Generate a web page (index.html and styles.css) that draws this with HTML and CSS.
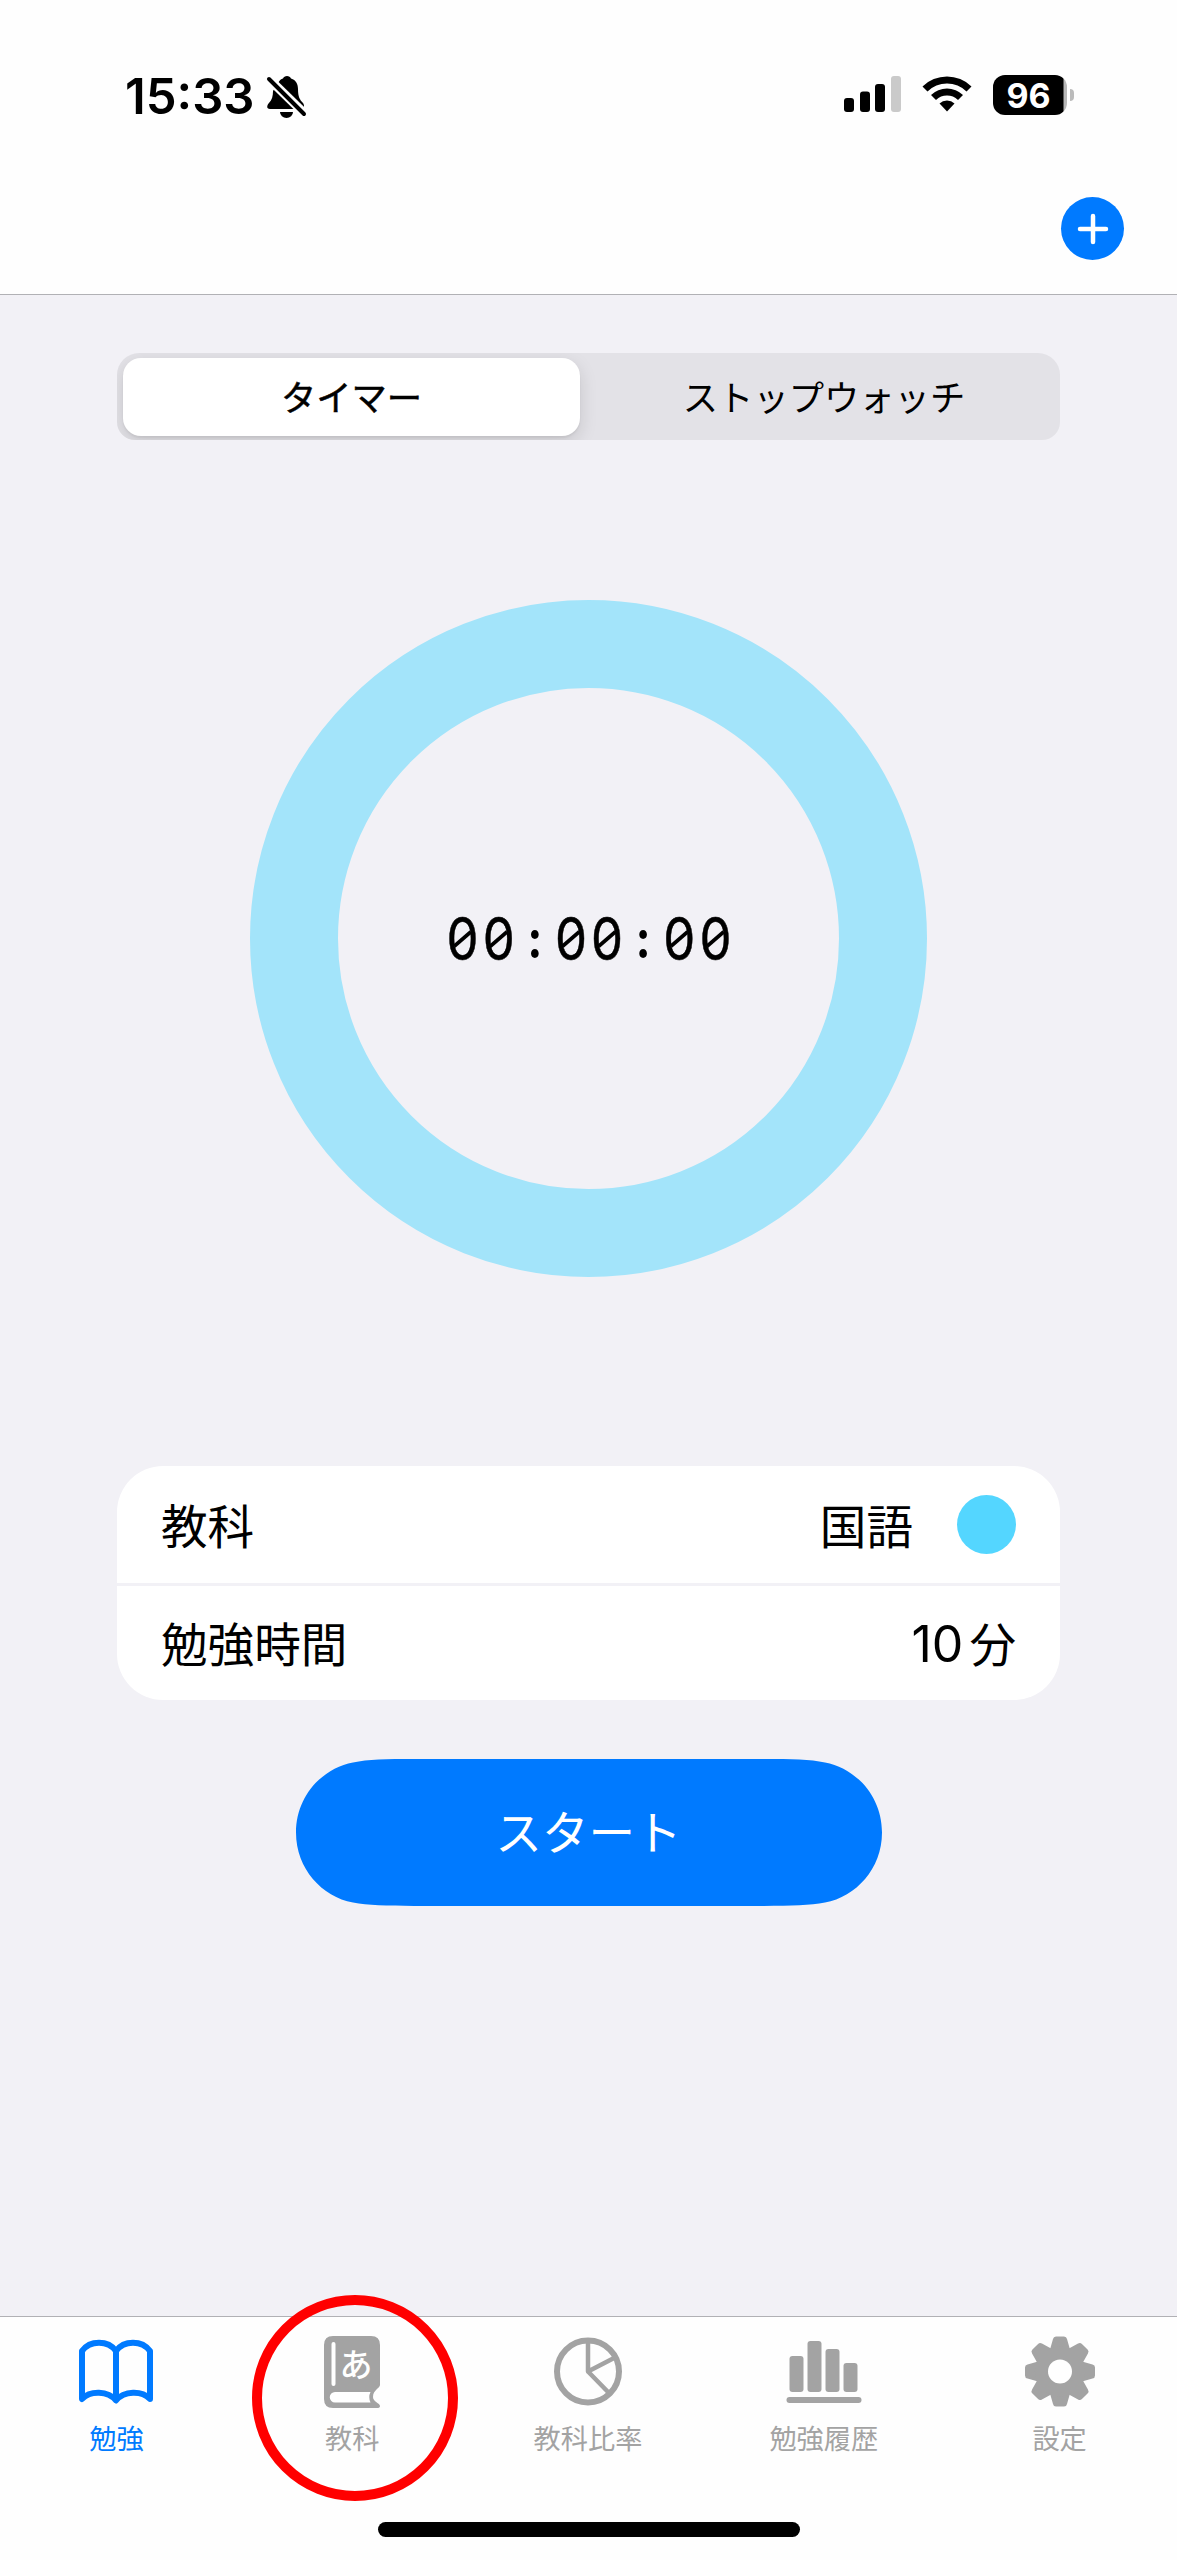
FILE: index.html
```html
<!DOCTYPE html>
<html lang="ja">
<head>
    <meta charset="UTF-8">
    <title>勉強タイマー</title>
    <meta name="viewport" content="width=device-width, initial-scale=1.0">
    <link rel="stylesheet" href="styles.css">
</head>
<body>
    <header class="header">
        <div class="status-bar">
            <div class="clock">
                <span class="clock-time">15:33</span>
                <svg class="bell" width="42" height="44" viewBox="0 0 42 44">
                    <path d="M12 8 C14 5 15 4 17 3.5 C18 0 24 0 25 3.5 C30 5 32 9 32 14 C32 22 34 25 37 28 C39 31 38 34 35 34 H4 C0 34 1 30 3 28 C6 25 7 21 7 16 Z"/>
                    <path d="M14 37 H27 A6.5 6 0 0 1 14 37 Z"/>
                    <path class="bell-gap" d="M3 4 L39 39"/>
                    <path class="bell-slash" d="M3 4 L38 39"/>
                </svg>
            </div>
            <div class="status-icons">
                <svg width="58" height="38" viewBox="0 0 58 38">
                    <rect x="0" y="22" width="10" height="14" rx="3"/>
                    <rect x="16" y="15.500" width="10" height="20.500" rx="3"/>
                    <rect x="31" y="8" width="10" height="28" rx="3"/>
                    <rect x="47" y="0" width="10" height="36" rx="3" fill="#cacaca"/>
                </svg>
                <svg width="50" height="38" viewBox="0 0 50 38">
                    <path d="M0.500 10.500 A35 35 0 0 1 49.500 10.500 L44.500 15.500 A27.500 27.500 0 0 0 5.500 15.500 Z"/>
                    <path d="M9 19 A23 23 0 0 1 41 19 L36 24 A16 16 0 0 0 14 24 Z"/>
                    <path d="M17.500 27.500 A11 11 0 0 1 32.500 27.500 L25 35.500 Z"/>
                </svg>
                <div class="battery">
                    <span class="battery-level">96</span>
                    <span class="battery-cap"></span>
                </div>
            </div>
        </div>
        <div class="nav-bar">
            <button class="add-button" aria-label="追加">
                <svg width="32" height="32" viewBox="0 0 32 32">
                    <path d="M16 3 V29 M3 16 H29"/>
                </svg>
            </button>
        </div>
    </header>

    <main class="content">
        <div class="segmented">
            <div class="segment active">タイマー</div>
            <div class="segment">ストップウォッチ</div>
        </div>

        <div class="ring">
            <div class="ring-time"><span class="zero">0</span><span class="zero">0</span><span class="colon">:</span><span class="zero">0</span><span class="zero">0</span><span class="colon">:</span><span class="zero">0</span><span class="zero">0</span></div>
        </div>

        <div class="card">
            <div class="row">
                <span>教科</span>
                <span class="row-value"><span class="value-text">国語</span><i class="dot"></i></span>
            </div>
            <div class="row">
                <span>勉強時間</span>
                <span class="row-value"><span class="minutes">10</span><span class="value-text">分</span></span>
            </div>
        </div>

        <button class="start-button">
            <svg class="start-shape" width="586" height="147" viewBox="0 0 586 174" preserveAspectRatio="none">
                <path d="M0 87 C0 44 26 11 57 4 C72 0.500 90 0 118 0 H468 C496 0 514 0.500 529 4 C560 11 586 44 586 87 C586 130 560 163 529 170 C514 173.500 496 174 468 174 H118 C90 174 72 173.500 57 170 C26 163 0 130 0 87 Z"/>
            </svg>
            <span>スタート</span>
        </button>
    </main>

    <footer class="tab-bar">
        <nav class="tabs">
            <a class="tab selected">
                <svg width="80" height="76" viewBox="0 0 80 76">
                    <path class="line" stroke-width="6" d="M6 18 C14 7 32 7 40 18 C48 7 66 7 74 18 V66 C66 57.500 48 57.500 40 67.500 C32 57.500 14 57.500 6 66 Z M40 18 V67"/>
                </svg>
                <span>勉強</span>
            </a>
            <a class="tab marked">
                <svg width="58" height="76" viewBox="0 0 58 76">
                    <path d="M10 3 H48 Q57 3 57 12 V52 C57 55 50 57 50 64 C50 69 57 70 57 73 Q57 75 54 75 H10 Q1 75 1 66 V12 Q1 3 10 3 Z"/>
                    <path fill="#fff" d="M12 59 H47.500 Q45 64 47.500 69.500 H12 A5.250 5.250 0 0 1 12 59 Z"/>
                    <path stroke="#fff" stroke-width="4" stroke-linecap="round" d="M10.500 11 V51"/>
                    <text class="kana" x="33" y="44" text-anchor="middle">あ</text>
                </svg>
                <span>教科</span>
            </a>
            <a class="tab">
                <svg width="70" height="76" viewBox="0 0 70 76">
                    <circle class="line" cx="35" cy="38.500" r="31" stroke-width="6"/>
                    <path class="line" stroke-width="4.500" d="M35 8 V38.500 L62 24.500 M35 38.500 L56 60"/>
                </svg>
                <span>教科比率</span>
            </a>
            <a class="tab">
                <svg width="76" height="76" viewBox="0 0 76 76">
                    <rect x="3.500" y="23" width="14" height="36" rx="3"/>
                    <rect x="21.500" y="8" width="14" height="51" rx="3"/>
                    <rect x="39.500" y="16" width="14" height="43" rx="3"/>
                    <rect x="57.500" y="30" width="14" height="29" rx="3"/>
                    <rect x="0.500" y="64" width="75" height="6" rx="3"/>
                </svg>
                <span>勉強履歴</span>
            </a>
            <a class="tab">
                <svg width="72" height="76" viewBox="-36 -38.500 72 76">
                    <defs>
                        <path id="tooth" d="M-10 -22 L-7 -32.500 Q-6.500 -35 -4 -35 H4 Q6.500 -35 7 -32.500 L10 -22 Z"/>
                    </defs>
                    <use href="#tooth"/>
                    <use href="#tooth" transform="rotate(45)"/>
                    <use href="#tooth" transform="rotate(90)"/>
                    <use href="#tooth" transform="rotate(135)"/>
                    <use href="#tooth" transform="rotate(180)"/>
                    <use href="#tooth" transform="rotate(225)"/>
                    <use href="#tooth" transform="rotate(270)"/>
                    <use href="#tooth" transform="rotate(315)"/>
                    <circle r="25"/>
                    <circle r="12" fill="#fff"/>
                </svg>
                <span>設定</span>
            </a>
        </nav>
        <div class="home-indicator"></div>
    </footer>
</body>
</html>
```

FILE: styles.css
```css
* {
    box-sizing: border-box;
}
body {
    margin: 0;
    height: 2560px;
    display: flex;
    flex-direction: column;
    overflow: hidden;
    background-color: #f2f1f6;
    color: #000;
    font-family: "Noto Sans CJK JP", sans-serif;
}
button {
    border: none;
    padding: 0;
    font-family: inherit;
}
svg {
    display: block;
}

/* status bar and navigation */
.header {
    height: 295px;
    background-color: #fefefe;
    border-bottom: 1px solid #b1b1b5;
}
.status-bar {
    height: 165px;
    padding: 75px 103px 0 125px;
    display: flex;
    justify-content: space-between;
    align-items: flex-start;
}
.clock {
    display: flex;
    gap: 12px;
}
.clock-time {
    width: 129px;
    font-family: Inter, sans-serif;
    font-size: 49px;
    font-weight: 600;
    line-height: 43px;
    white-space: nowrap;
}
.bell-gap {
    stroke: #fefefe;
    stroke-width: 9;
}
.bell-slash {
    stroke: #000;
    stroke-width: 4;
    stroke-linecap: round;
}
.status-icons {
    display: flex;
    align-items: center;
    gap: 20px;
}
.battery {
    margin-left: 1px;
    display: flex;
    align-items: center;
    gap: 3px;
}
.battery-level {
    width: 74px;
    height: 40px;
    padding-right: 3px;
    border-radius: 12px;
    background: linear-gradient(to right, #000 70px, #b8b8b8 71px);
    color: #fff;
    font-family: Inter, sans-serif;
    font-size: 34px;
    font-weight: 700;
    line-height: 41px;
    text-align: center;
}
.battery-cap {
    width: 4px;
    height: 12px;
    border-radius: 0 4px 4px 0;
    background-color: #bbb;
}
.nav-bar {
    padding: 32px 53px 0 0;
    display: flex;
    justify-content: flex-end;
}
.add-button {
    width: 63px;
    height: 63px;
    display: flex;
    justify-content: center;
    align-items: center;
    border-radius: 50%;
    background-color: #007aff;
}
.add-button path {
    stroke: #fff;
    stroke-width: 4.5;
    stroke-linecap: round;
}

/* timer */
.content {
    height: 2021px;
    display: flex;
    flex-direction: column;
    align-items: center;
}
.segmented {
    width: 943px;
    height: 87px;
    margin-top: 58px;
    padding: 5px 0 4px 6px;
    display: flex;
    overflow: hidden;
    border-radius: 22px 22px 18px 18px;
    background-color: #e3e2e7;
    font-size: 35.3px;
}
.segment {
    flex: 1;
    display: flex;
    justify-content: center;
    align-items: center;
    padding: 0 0 3px 8px;
}
.segment.active {
    flex: none;
    width: 457px;
    padding-left: 0;
    border-radius: 18px;
    background-color: #fff;
    -webkit-text-stroke: 0.5px #000;
    box-shadow: 0 6px 18px rgba(0, 0, 0, 0.13), 0 2px 2px rgba(0, 0, 0, 0.05);
}
.ring {
    width: 677px;
    height: 677px;
    margin-top: 160px;
    display: flex;
    justify-content: center;
    align-items: center;
    border: 88px solid #a3e4fa;
    border-radius: 50%;
}
.ring-time {
    display: flex;
    font-family: Inter, sans-serif;
    font-size: 59px;
    line-height: 72px;
    transform: scaleX(0.86);
}
.zero,
.colon {
    position: relative;
    width: 42px;
    text-align: center;
}
.zero {
    -webkit-text-stroke: 0.5px #000;
}
.colon {
    font-size: 53px;
    font-weight: 700;
}
/* slash inside the zero */
.zero::after {
    content: "";
    position: absolute;
    top: 34px;
    left: 9px;
    width: 24px;
    height: 4px;
    background-color: #000;
    transform: rotate(-37deg);
}
.card {
    width: 943px;
    height: 234px;
    margin-top: 189px;
    border-radius: 46px;
    background-color: #fff;
    font-size: 46.600px;
    line-height: 60px;
}
.row {
    height: 117px;
    padding: 0 44px;
    display: flex;
    justify-content: space-between;
    align-items: center;
}
.row > span:first-child,
.value-text {
    padding-bottom: 2px;
}
.row + .row {
    border-top: 3px solid #f2f1f6;
}
.row-value {
    display: flex;
    align-items: center;
}
.dot {
    width: 59px;
    height: 59px;
    margin-left: 44px;
    border-radius: 50%;
    background-color: #54d6ff;
}
.minutes {
    margin-right: 6px;
    padding-top: 2px;
    font-family: Inter, sans-serif;
    font-size: 50px;
}
.start-button {
    position: relative;
    width: 586px;
    height: 147px;
    margin-top: 59px;
    padding-bottom: 5px;
    background: none;
    color: #fff;
    font-size: 46.600px;
    line-height: 60px;
}
.start-shape {
    position: absolute;
    top: 0;
    left: 0;
    fill: #007aff;
}
.start-button span {
    position: relative;
}

/* tab bar */
.tab-bar {
    height: 244px;
    display: flex;
    flex-direction: column;
    align-items: center;
    background-color: #fefefe;
    border-top: 1px solid #b1b1b5;
}
.tabs {
    width: 1179px;
    height: 205px;
    margin-left: -1px;
    padding-top: 16px;
    display: flex;
}
.tab {
    position: relative;
    flex: 1;
    display: flex;
    flex-direction: column;
    align-items: center;
    gap: 8px;
    color: #a3a3a3;
    font-size: 27.200px;
    line-height: 40px;
}
.tab svg {
    fill: currentColor;
}
.tab .line {
    fill: none;
    stroke: currentColor;
    stroke-linejoin: round;
}
.tab .kana {
    fill: #fff;
    font-size: 33px;
    font-weight: 500;
}
.selected {
    color: #007aff;
}
.marked::after {
    content: "";
    position: absolute;
    top: -38px;
    left: 18px;
    width: 206px;
    height: 206px;
    box-sizing: border-box;
    border: 10px solid #f00;
    border-radius: 50%;
}
.home-indicator {
    width: 422px;
    height: 15px;
    border-radius: 8px;
    background-color: #000;
}
```
